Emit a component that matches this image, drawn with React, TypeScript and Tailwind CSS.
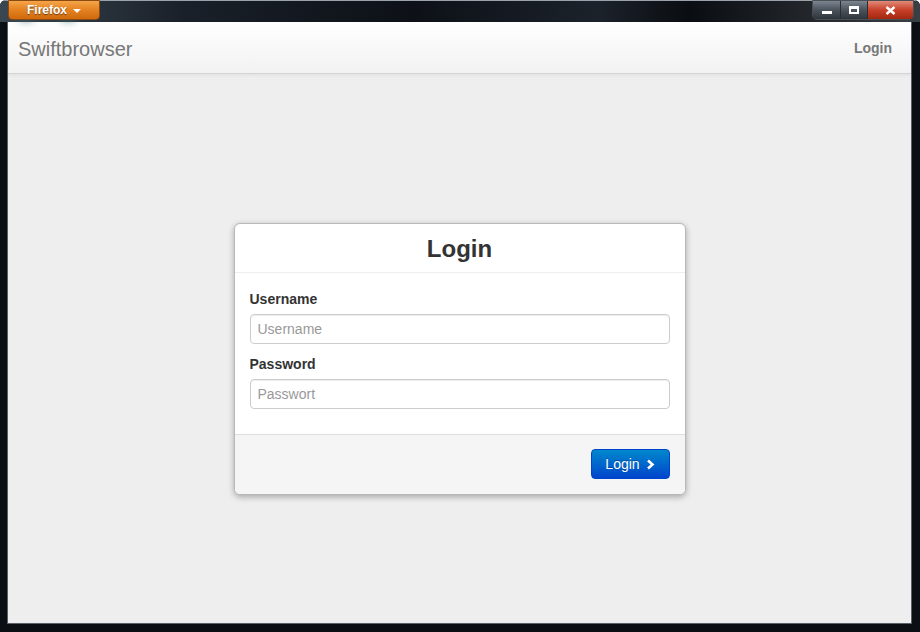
import React from "react";

export default function App() {
  return (
    <div
      className="relative w-[920px] h-[632px] flex flex-col overflow-hidden bg-[#0b0f14] rounded-t-[6px]"
      style={{ fontFamily: '"Liberation Sans", Arial, sans-serif' }}
    >
      {/* title bar */}
      <div className="relative h-[22px] shrink-0 bg-[linear-gradient(90deg,#3a4650_0%,#1a2029_20%,#0d1117_45%,#1c222b_65%,#0a0d11_75%,#3a3f44_100%)] border-t border-[#9aa3ab]">
        <div className="absolute left-[18px] top-[8px] w-[16px] h-[12px] rounded-full bg-[#3d6a70] blur-[4px] opacity-70" />
        <div className="absolute left-[60px] top-[8px] w-[16px] h-[12px] rounded-full bg-[#3d6a70] blur-[4px] opacity-70" />
        <div className="absolute left-[8px] top-[-1px] w-[92px] h-[20px] rounded-b-[4px] border border-[#8a4a10] bg-[linear-gradient(180deg,#f5a54a_0%,#e4811f_50%,#cf6a0e_100%)] flex items-center justify-center gap-[6px]">
          <span className="text-white text-[12px] font-bold [text-shadow:0_1px_1px_rgba(0,0,0,0.5)]">Firefox</span>
          <span className="w-0 h-0 border-l-[4px] border-r-[4px] border-t-[4px] border-l-transparent border-r-transparent border-t-white mt-[1px]" />
        </div>
        <div className="absolute left-[812px] top-[-1px] h-[20px] flex rounded-b-[5px] overflow-hidden border border-[#4a4f55]">
          <div className="w-[28px] h-full bg-[linear-gradient(180deg,#7b8590_0%,#4b535c_50%,#2f353b_100%)] flex items-end justify-center pb-[5px] border-r border-[#2a2e33]">
            <div className="w-[10px] h-[3px] bg-white" />
          </div>
          <div className="w-[27px] h-full bg-[linear-gradient(180deg,#7b8590_0%,#4b535c_50%,#2f353b_100%)] flex items-center justify-center border-r border-[#2a2e33]">
            <div className="w-[10px] h-[8px] border-2 border-white border-t-[3px]" />
          </div>
          <div className="w-[45px] h-full bg-[linear-gradient(180deg,#e08a78_0%,#c8402a_50%,#a2280f_100%)] flex items-center justify-center">
            <svg width="11" height="9" viewBox="0 0 11 9">
              <path d="M1.5 1 L9.5 8 M9.5 1 L1.5 8" stroke="white" strokeWidth="2.4" />
            </svg>
          </div>
        </div>
      </div>

      {/* content window */}
      <div className="flex-1 flex flex-col ml-[7px] mr-[8px] mb-[8px] bg-[#eeeeee] border border-[#5a6068] border-t-0">
        <div className="h-[52px] shrink-0 flex items-center justify-between bg-[linear-gradient(180deg,#ffffff_0%,#f2f2f2_100%)] border-b border-[#d4d4d4] shadow-[0_1px_4px_rgba(0,0,0,0.065)] pl-[10px] pr-[19px]">
          <span className="text-[20px] text-[#777777] pt-[2px]">Swiftbrowser</span>
          <span className="text-[14px] font-bold text-[#777777] pt-[1px]">Login</span>
        </div>

        <div className="flex justify-center pt-[149px]">
          <div className="w-[452px] bg-white border border-[#b8b8b8] rounded-[6px] shadow-[0_2px_6px_rgba(0,0,0,0.3)] overflow-hidden">
            <div className="h-[49px] flex items-center justify-center border-b border-[#eeeeee]">
              <h1 className="text-[24px] font-bold text-[#333333] pt-[2px]">Login</h1>
            </div>
            <div className="px-[15px] pt-[16px] pb-[25px]">
              <label className="block text-[14px] leading-[20px] font-bold text-[#333333] mb-[5px]">Username</label>
              <input
                className="block w-full h-[30px] px-[7px] text-[14px] border border-[#cccccc] rounded-[4px] shadow-[inset_0_1px_1px_rgba(0,0,0,0.075)] placeholder:text-[#999999] outline-none"
                placeholder="Username"
              />
              <label className="block text-[14px] leading-[20px] font-bold text-[#333333] mt-[10px] mb-[5px]">Password</label>
              <input
                className="block w-full h-[30px] px-[7px] text-[14px] border border-[#cccccc] rounded-[4px] shadow-[inset_0_1px_1px_rgba(0,0,0,0.075)] placeholder:text-[#999999] outline-none"
                placeholder="Passwort"
              />
            </div>
            <div className="h-[60px] bg-[#f5f5f5] border-t border-[#dddddd] flex items-start justify-end px-[15px] pt-[14px]">
              <button className="h-[30px] w-[79px] rounded-[4px] border border-[#0044cc] bg-[linear-gradient(180deg,#0088cc_0%,#0044cc_100%)] text-white text-[14px] flex items-center justify-center gap-[6px] [text-shadow:0_-1px_0_rgba(0,0,0,0.25)]">
                Login
                <svg width="9" height="11" viewBox="0 0 9 11">
                  <path d="M2 1.5 L6.5 5.5 L2 9.5" fill="none" stroke="white" strokeWidth="2.6" />
                </svg>
              </button>
            </div>
          </div>
        </div>
      </div>
    </div>
  );
}
